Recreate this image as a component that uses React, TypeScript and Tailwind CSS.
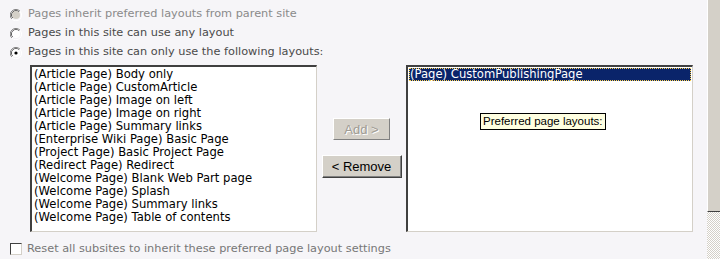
import { ReactNode } from 'react';

const available = [
  '(Article Page) Body only',
  '(Article Page) CustomArticle',
  '(Article Page) Image on left',
  '(Article Page) Image on right',
  '(Article Page) Summary links',
  '(Enterprise Wiki Page) Basic Page',
  '(Project Page) Basic Project Page',
  '(Redirect Page) Redirect',
  '(Welcome Page) Blank Web Part page',
  '(Welcome Page) Splash',
  '(Welcome Page) Summary links',
  '(Welcome Page) Table of contents',
];

function Radio({ checked, disabled }: { checked?: boolean; disabled?: boolean }) {
  return (
    <svg width="12" height="12" viewBox="0 0 12 12" className="shrink-0">
      <path d="M10 2.2A5.5 5.5 0 0 0 1.8 10" fill="none" stroke="#808080" strokeWidth="1" />
      <path d="M9 3A4.3 4.3 0 0 0 2.8 9" fill="none" stroke="#404040" strokeWidth="1" />
      <path d="M10 2.2A5.5 5.5 0 0 1 1.8 10" fill="none" stroke="#ffffff" strokeWidth="1" />
      <circle cx="6" cy="6" r="4" fill={disabled ? '#d4d0c8' : '#ffffff'} />
      {checked && <circle cx="6" cy="6" r="1.6" fill="#000" />}
    </svg>
  );
}

function Option({ children, checked, disabled }: { children: ReactNode; checked?: boolean; disabled?: boolean }) {
  return (
    <div className="flex items-center gap-[6px] h-[19px]">
      <Radio checked={checked} disabled={disabled} />
      <span className={disabled ? 'text-[#8a8a8a]' : 'text-[#4a4a4a]'}>{children}</span>
    </div>
  );
}

export default function App() {
  return (
    <div className="flex w-[720px] h-[259px] overflow-hidden bg-[#f6f5f8] font-['DejaVu_Sans',Verdana,sans-serif] text-[11.3px]">
      <div className="flex-1 flex flex-col pl-[10px] pt-[5px]">
        <Option disabled>Pages inherit preferred layouts from parent site</Option>
        <Option>Pages in this site can use any layout</Option>
        <Option checked>Pages in this site can only use the following layouts:</Option>

        <div className="flex ml-[20px] mt-[3px] h-[167px]">
          <div className="w-[287px] h-full bg-white border-t-2 border-l-2 border-t-[#404040] border-l-[#404040] border-r border-b border-r-[#d4d0c8] border-b-[#d4d0c8] pl-[2px] pt-[1px] leading-[13px] text-[11.6px] text-black">
            {available.map((item) => (
              <div key={item} className="h-[13px] whitespace-nowrap">{item}</div>
            ))}
          </div>

          <div className="w-[89px] flex flex-col items-center pt-[53px] gap-[15px] font-['Liberation_Sans',Arial,sans-serif] text-[13px]">
            <button className="w-[57px] h-[22px] bg-[#d4d0c8] border border-t-white border-l-white border-r-[#808080] border-b-[#808080] text-[#a09c94] [text-shadow:1px_1px_0_#fff] leading-none">
              Add &gt;
            </button>
            <button className="w-[80px] h-[23px] bg-[#d4d0c8] border border-t-white border-l-white border-r-[#404040] border-b-[#404040] shadow-[inset_-1px_-1px_0_#808080] text-black leading-none">
              &lt; Remove
            </button>
          </div>

          <div className="relative w-[287px] h-full bg-white border-t-2 border-l-2 border-t-[#404040] border-l-[#404040] border-r border-b border-r-[#d4d0c8] border-b-[#d4d0c8] p-[1px] leading-[13px] text-[11.6px]">
            <div className="h-[13px] bg-[#0a246a] text-white whitespace-nowrap outline-1 outline-dotted outline-[#ffd34d] -outline-offset-1 pl-[1px]">
              (Page) CustomPublishingPage
            </div>
            <div className="absolute left-[72px] top-[46px] h-[17px] px-[2px] bg-[#ffffe1] border border-black text-black leading-[15px] whitespace-nowrap font-['Liberation_Sans',Arial,sans-serif] text-[11.5px]">
              Preferred page layouts:
            </div>
          </div>
        </div>

        <div className="flex items-center gap-[5px] mt-[10px] h-[14px]">
          <div className="w-[12px] h-[12px] bg-white border border-t-[#404040] border-l-[#404040] border-r-[#d4d0c8] border-b-[#d4d0c8] shrink-0" />
          <span className="text-[#777777]">Reset all subsites to inherit these preferred page layout settings</span>
        </div>
      </div>

      <div className="w-[13px] flex flex-col">
        <div className="h-[212px] bg-[#d4d0c8] border-l border-l-white border-b border-b-[#404040]" />
        <div className="flex-1 bg-[repeating-conic-gradient(#d4d0c8_0_25%,#ffffff_0_50%)] bg-[length:2px_2px]" />
      </div>
    </div>
  );
}
